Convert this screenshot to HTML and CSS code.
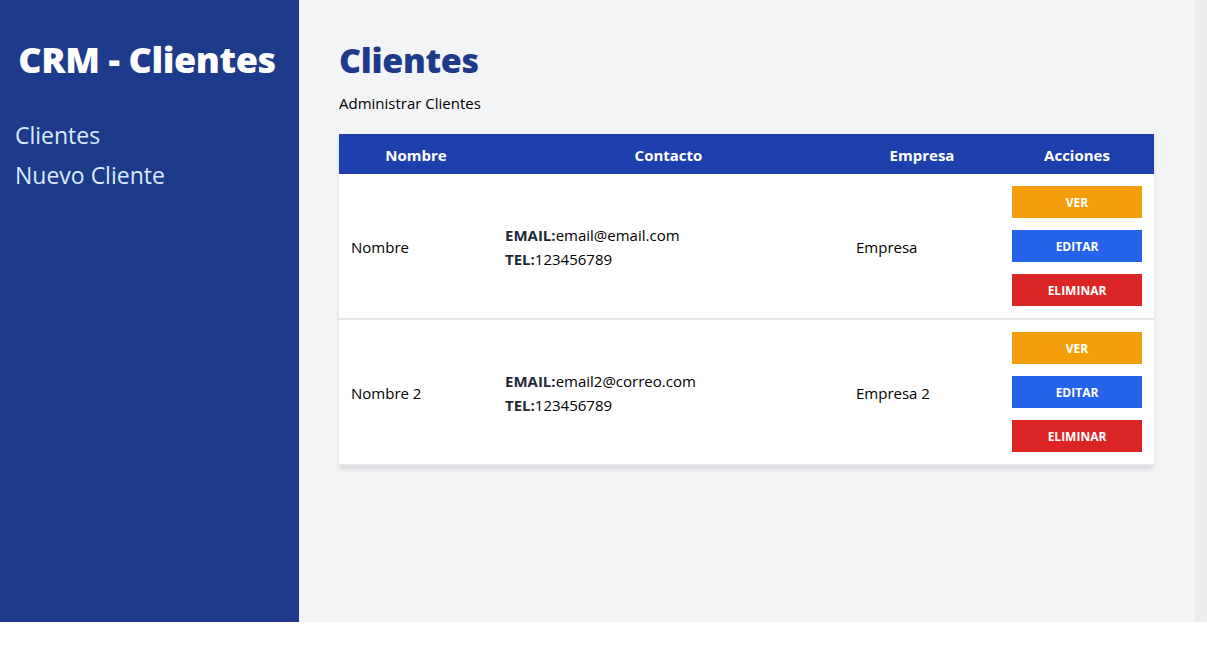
FILE: index.html
```html
<!DOCTYPE html>
<html lang="es">
<head>
<meta charset="utf-8">
<title>CRM - Clientes</title>
<link rel="stylesheet" href="styles.css">
</head>
<body>
<div class="app">
  <aside class="sidebar">
    <h2 class="brand">CRM - Clientes</h2>
    <nav class="nav">
      <a href="#" class="nav-link">Clientes</a>
      <a href="#" class="nav-link">Nuevo Cliente</a>
    </nav>
  </aside>
  <main class="main">
    <h1 class="title">Clientes</h1>
    <p class="subtitle">Administrar Clientes</p>
    <table class="table">
      <colgroup>
        <col class="c-nombre">
        <col class="c-contacto">
        <col class="c-empresa">
        <col class="c-acciones">
      </colgroup>
      <thead>
        <tr>
          <th>Nombre</th>
          <th>Contacto</th>
          <th>Empresa</th>
          <th>Acciones</th>
        </tr>
      </thead>
      <tbody>
        <tr>
          <td>Nombre</td>
          <td>
            <p class="line"><span class="label">EMAIL:</span>email@email.com</p>
            <p class="line"><span class="label">TEL:</span>123456789</p>
          </td>
          <td>Empresa</td>
          <td class="actions">
            <div class="btns">
              <a href="#" class="btn btn-ver">Ver</a>
              <a href="#" class="btn btn-editar">Editar</a>
              <a href="#" class="btn btn-eliminar">Eliminar</a>
            </div>
          </td>
        </tr>
        <tr>
          <td>Nombre 2</td>
          <td>
            <p class="line"><span class="label">EMAIL:</span>email2@correo.com</p>
            <p class="line"><span class="label">TEL:</span>123456789</p>
          </td>
          <td>Empresa 2</td>
          <td class="actions">
            <div class="btns">
              <a href="#" class="btn btn-ver">Ver</a>
              <a href="#" class="btn btn-editar">Editar</a>
              <a href="#" class="btn btn-eliminar">Eliminar</a>
            </div>
          </td>
        </tr>
      </tbody>
    </table>
  </main>
  <div class="strip"></div>
</div>
</body>
</html>
```
FILE: styles.css
```css
* { box-sizing: border-box; }
html, body { margin: 0; padding: 0; background: #ffffff; }
body {
  font-family: "Open Sans", "Noto Sans", "Liberation Sans", sans-serif;
  color: #000;
}
.app {
  display: flex;
  height: 622px;
  width: 1207px;
}
.sidebar {
  width: 299px;
  flex: none;
  background: #1e3a8a;
  padding: 38px 20px 0 15px;
}
.brand {
  margin: 0;
  color: #fff;
  font-size: 36px;
  line-height: 44px;
  font-weight: 800;
  text-align: center;
  letter-spacing: -0.4px;
  white-space: nowrap;
}
.nav {
  display: flex;
  flex-direction: column;
  margin-top: 33px;
}
.nav-link {
  color: #dbeafe;
  text-decoration: none;
  font-size: 23px;
  line-height: 40px;
}
.main {
  flex: 1;
  background: #f3f4f6;
  padding: 38px 41px 0 40px;
}
.strip {
  width: 12px;
  flex: none;
  background: #ececee;
}
.title {
  margin: 0;
  color: #1e3a8a;
  font-size: 34px;
  line-height: 44px;
  font-weight: 800;
  letter-spacing: -0.3px;
}
.subtitle {
  margin: 10px 0 0;
  font-size: 15px;
  line-height: 22px;
}
.table {
  margin-top: 20px;
  width: 815px;
  border-collapse: collapse;
  table-layout: fixed;
  background: #fff;
  box-shadow: 0 4px 6px -1px rgba(0,0,0,0.1), 0 2px 4px -1px rgba(0,0,0,0.06);
}
.c-nombre { width: 154px; }
.c-contacto { width: 351px; }
.c-empresa { width: 156px; }
.c-acciones { width: 154px; }
.table thead tr { background: #1e40af; }
.table th {
  color: #fff;
  font-size: 15px;
  font-weight: 700;
  height: 40px;
  padding: 1px 12px 0;
  text-align: center;
}
.table td {
  padding: 13px 12px 11px;
  font-size: 15px;
  line-height: 24px;
  vertical-align: middle;
  color: #000;
}
.table td.actions { padding: 12px; }
.table tbody tr { border-bottom: 2px solid #e5e7eb; }
.line { margin: 0; }
.label { font-weight: 700; color: #1f2937; }
.btns {
  display: flex;
  flex-direction: column;
  gap: 12px;
}
.btn {
  display: block;
  height: 32px;
  line-height: 33px;
  text-align: center;
  color: #fff;
  text-decoration: none;
  text-transform: uppercase;
  font-size: 12px;
  font-weight: 700;
}
.btn-ver { background: #f59e0b; }
.btn-editar { background: #2563eb; }
.btn-eliminar { background: #dc2626; }
```
